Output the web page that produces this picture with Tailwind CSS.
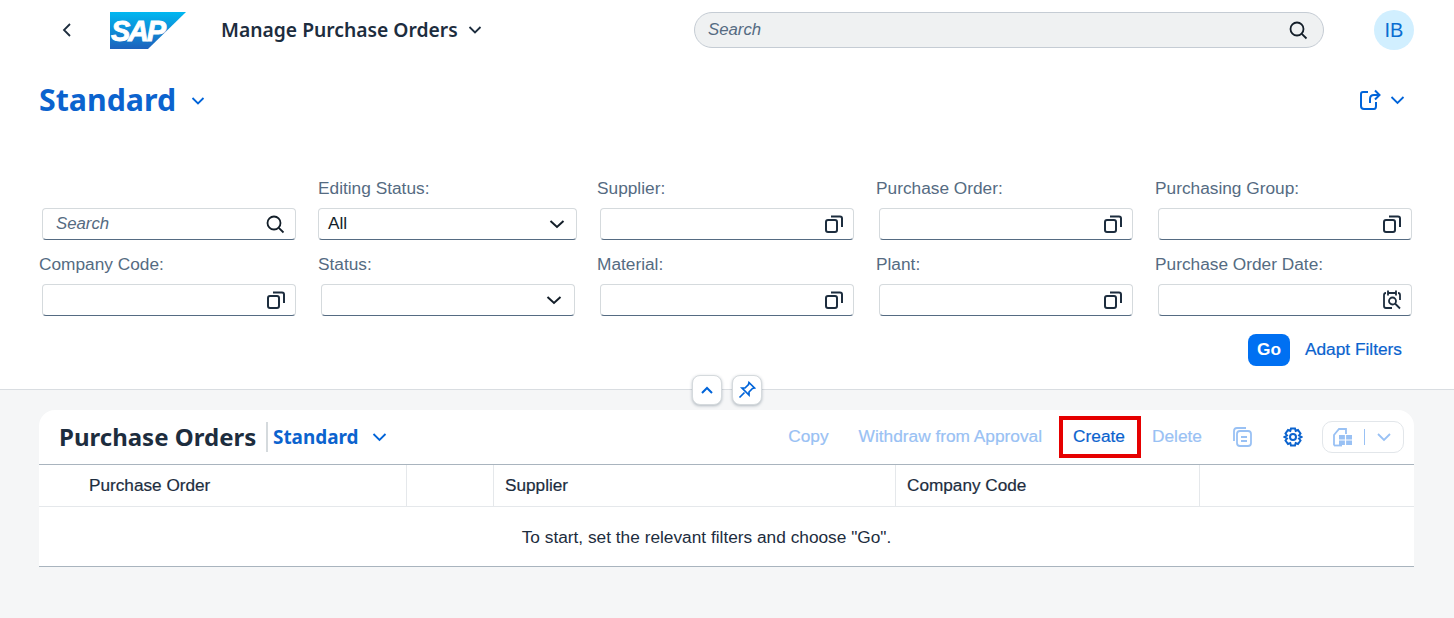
<!DOCTYPE html>
<html><head><meta charset="utf-8"><script src="https://cdn.jsdelivr.net/npm/@tailwindcss/browser@4"></script></head>
<body class="m-0 bg-white font-['Liberation_Sans',Arial,sans-serif] text-[#1d2d3e] overflow-hidden">
<div class="w-[1454px] h-[618px] flex flex-col overflow-hidden">
<div class="h-[390px] bg-white border-b border-[#d9dde1] shrink-0 relative">
  <header class="h-[60px] flex items-center">
    <svg class="ml-[61px] w-3 h-4" viewBox="0 0 12 16" fill="none" stroke="#1d2d3e" stroke-width="1.8"><path d="M9 2 L3 8 L9 14"/></svg>
    <svg class="ml-[37px] w-[76px] h-[37px] mt-[1px]" viewBox="0 0 76 37"><defs><linearGradient id="g" x1="0" y1="0" x2="0" y2="1"><stop offset="0" stop-color="#00b8f1"/><stop offset="1" stop-color="#1d61bc"/></linearGradient></defs><path d="M0 0H76L38 37H0Z" fill="url(#g)"/><text x="1" y="29" font-family="Liberation Sans" font-weight="700" font-style="italic" font-size="29" fill="#fff" stroke="#fff" stroke-width="0.8" textLength="55">SAP</text></svg>
    <div class="ml-[35px] text-[19.3px] font-semibold font-['Noto_Sans',sans-serif] whitespace-nowrap leading-none w-[238px]">Manage Purchase Orders</div>
    <svg class="ml-[9px] w-[14px] h-[10px]" viewBox="0 0 14 10" fill="none" stroke="#1d2d3e" stroke-width="1.8"><path d="M1.5 2 L7 7.5 L12.5 2"/></svg>
    <div class="ml-[212px] w-[630px] h-9 rounded-[18px] bg-[#eff1f2] border border-[#c5ccd4] flex items-center justify-between pl-[13px] pr-[15px] shrink-0">
      <span class="italic text-[#556b82] text-[16.8px]">Search</span>
      <svg class="w-[19px] h-[19px]" viewBox="0 0 19 19" fill="none" stroke="#131e29" stroke-width="1.8"><circle cx="8" cy="8" r="6.5"/><path d="M12.8 12.8 L17.5 17.5"/></svg>
    </div>
    <div class="ml-[50px] w-10 h-10 rounded-full bg-[#d1efff] text-[#0a6ed1] text-[20px] flex items-center justify-center shrink-0">IB</div>
  </header>
  <div class="h-[80px] flex items-start pl-[39px] relative">
    <span class="text-[30.3px] font-bold font-['Noto_Sans',sans-serif] text-[#0b63ce] leading-none mt-[25px] w-[137px] whitespace-nowrap">Standard</span>
    <svg class="ml-[15px] mt-[36px] w-[14px] h-[10px]" viewBox="0 0 14 10" fill="none" stroke="#0064d9" stroke-width="1.8"><path d="M1.5 2 L7 7.5 L12.5 2"/></svg>
    <div class="ml-auto mr-[49px] mt-[29px] flex items-center gap-[9px]">
      <svg class="w-[21px] h-[21px]" viewBox="0 0 21 21" fill="none" stroke="#0064d9" stroke-width="2"><path d="M8 3 H3 Q1 3 1 5 V17 Q1 20 4 20 H14 Q16 20 16 17 V13"/><path d="M10 14 V10 Q10 6 14 6 H19 M15 1.5 L19.5 6 L15 10.5"/></svg>
      <svg class="w-[15px] h-[10px]" viewBox="0 0 14 10" fill="none" stroke="#0064d9" stroke-width="1.8"><path d="M1 2 L7 8 L13 2"/></svg>
    </div>
  </div>
  <div class="grid grid-cols-[279px_279px_279px_279px_279px] pl-[39px] mt-[36px] text-[17.3px] text-[#556b82]">
    <div class="h-[76px]">
      <div class="h-[32px]"></div>
      <div class="ml-[3px] w-[254px] h-[32px] rounded-[4px] border border-[#d5dadd] border-b-[#556b82] flex items-center justify-between pl-[13px] pr-[10px]"><span class="italic text-[16.8px] text-[#556b82]">Search</span><svg class="w-[19px] h-[19px]" viewBox="0 0 19 19" fill="none" stroke="#131e29" stroke-width="1.8"><circle cx="8" cy="8" r="6.5"/><path d="M12.8 12.8 L17.5 17.5"/></svg></div>
    </div>
    <div class="h-[76px]">
      <div class="h-[32px] leading-[24px]">Editing Status:</div>
      <div class="w-[259px] h-[32px] rounded-[4px] border border-[#d5dadd] border-b-[#556b82] flex items-center justify-between pl-[9px] pr-[11px] text-[#131e29]"><span>All</span><svg class="w-[16px] h-[10px]" viewBox="0 0 16 10" fill="none" stroke="#131e29" stroke-width="2"><path d="M1.5 2 L8 8 L14.5 2"/></svg></div>
    </div>
    <div class="h-[76px]">
      <div class="h-[32px] leading-[24px]">Supplier:</div>
      <div class="ml-[3px] w-[254px] h-[32px] rounded-[4px] border border-[#d5dadd] border-b-[#556b82] flex items-center justify-end pr-[10px]"><svg class="w-[18px] h-[18px]" viewBox="0 0 18 18" fill="none" stroke="#1d2d3e" stroke-width="2"><rect x="1" y="5" width="11" height="12" rx="2"/><path d="M6 1.5 H15 Q17 1.5 17 3.5 V12"/></svg></div>
    </div>
    <div class="h-[76px]">
      <div class="h-[32px] leading-[24px]">Purchase Order:</div>
      <div class="ml-[3px] w-[254px] h-[32px] rounded-[4px] border border-[#d5dadd] border-b-[#556b82] flex items-center justify-end pr-[10px]"><svg class="w-[18px] h-[18px]" viewBox="0 0 18 18" fill="none" stroke="#1d2d3e" stroke-width="2"><rect x="1" y="5" width="11" height="12" rx="2"/><path d="M6 1.5 H15 Q17 1.5 17 3.5 V12"/></svg></div>
    </div>
    <div class="h-[76px]">
      <div class="h-[32px] leading-[24px]">Purchasing Group:</div>
      <div class="ml-[3px] w-[254px] h-[32px] rounded-[4px] border border-[#d5dadd] border-b-[#556b82] flex items-center justify-end pr-[10px]"><svg class="w-[18px] h-[18px]" viewBox="0 0 18 18" fill="none" stroke="#1d2d3e" stroke-width="2"><rect x="1" y="5" width="11" height="12" rx="2"/><path d="M6 1.5 H15 Q17 1.5 17 3.5 V12"/></svg></div>
    </div>
    <div class="h-[76px]">
      <div class="h-[32px] leading-[24px]">Company Code:</div>
      <div class="ml-[3px] w-[254px] h-[32px] rounded-[4px] border border-[#d5dadd] border-b-[#556b82] flex items-center justify-end pr-[10px]"><svg class="w-[18px] h-[18px]" viewBox="0 0 18 18" fill="none" stroke="#1d2d3e" stroke-width="2"><rect x="1" y="5" width="11" height="12" rx="2"/><path d="M6 1.5 H15 Q17 1.5 17 3.5 V12"/></svg></div>
    </div>
    <div class="h-[76px]">
      <div class="h-[32px] leading-[24px]">Status:</div>
      <div class="ml-[3px] w-[254px] h-[32px] rounded-[4px] border border-[#d5dadd] border-b-[#556b82] flex items-center justify-end pr-[12px]"><svg class="w-[16px] h-[10px]" viewBox="0 0 16 10" fill="none" stroke="#131e29" stroke-width="2"><path d="M1.5 2 L8 8 L14.5 2"/></svg></div>
    </div>
    <div class="h-[76px]">
      <div class="h-[32px] leading-[24px]">Material:</div>
      <div class="ml-[3px] w-[254px] h-[32px] rounded-[4px] border border-[#d5dadd] border-b-[#556b82] flex items-center justify-end pr-[10px]"><svg class="w-[18px] h-[18px]" viewBox="0 0 18 18" fill="none" stroke="#1d2d3e" stroke-width="2"><rect x="1" y="5" width="11" height="12" rx="2"/><path d="M6 1.5 H15 Q17 1.5 17 3.5 V12"/></svg></div>
    </div>
    <div class="h-[76px]">
      <div class="h-[32px] leading-[24px]">Plant:</div>
      <div class="ml-[3px] w-[254px] h-[32px] rounded-[4px] border border-[#d5dadd] border-b-[#556b82] flex items-center justify-end pr-[10px]"><svg class="w-[18px] h-[18px]" viewBox="0 0 18 18" fill="none" stroke="#1d2d3e" stroke-width="2"><rect x="1" y="5" width="11" height="12" rx="2"/><path d="M6 1.5 H15 Q17 1.5 17 3.5 V12"/></svg></div>
    </div>
    <div class="h-[76px]">
      <div class="h-[32px] leading-[24px]">Purchase Order Date:</div>
      <div class="ml-[3px] w-[254px] h-[32px] rounded-[4px] border border-[#d5dadd] border-b-[#556b82] flex items-center justify-end pr-[10px]"><svg class="w-[18px] h-[20px]" viewBox="0 0 18 20" fill="none" stroke="#1d2d3e" stroke-width="1.8"><path d="M5 3 H13 M5 0.5 V5.5 M13 0.5 V5.5 M3 3 Q1 3 1 5 V16 Q1 18 3 18 H9 M15 3 Q17 3 17 5 V10"/><circle cx="9.5" cy="11" r="3.5"/><path d="M12 13.5 L17 18.5"/></svg></div>
    </div>
  </div>
  <div class="flex justify-end items-center pr-[52px] mt-[6px] gap-[15px]">
    <div class="w-[42px] h-8 rounded-lg bg-[#0070f2] text-white font-bold text-[17.3px] flex items-center justify-center">Go</div>
    <div class="text-[#0b63ce] text-[17.3px] whitespace-nowrap [-webkit-text-stroke:0.2px_#0b63ce]">Adapt Filters</div>
  </div>
  <div class="absolute top-[375px] left-[692px] flex gap-[10px]">
    <div class="w-[30px] h-[30px] rounded-lg bg-white border border-[#d5dadd] shadow-[0_1px_3px_rgba(50,70,90,0.35)] flex items-center justify-center"><svg class="w-[14px] h-[10px]" viewBox="0 0 14 10" fill="none" stroke="#0064d9" stroke-width="2"><path d="M2 8 L7 3 L12 8"/></svg></div>
    <div class="w-[30px] h-[30px] rounded-lg bg-white border border-[#d5dadd] shadow-[0_1px_3px_rgba(50,70,90,0.35)] flex items-center justify-center"><svg class="w-[18px] h-[18px]" viewBox="0 0 18 18" fill="none" stroke="#0064d9" stroke-width="1.7"><path d="M11 1.5 L16.5 7 L14.5 7.5 L11 11 L11 14 L4 7 L7 7 L10.5 3.5 Z"/><path d="M6.5 11.5 L1.5 16.5"/></svg></div>
  </div>
</div>
<main class="flex-1 bg-[#f5f6f7] px-[39px] pr-[40px] pt-[20px]">
  <section class="bg-white rounded-t-[16px] border-b border-[#a9b4be]">
    <div class="h-[55px] flex items-center border-b border-[#a9b4be] pl-[20px] pr-[10px] relative">
      <span class="text-[24px] font-bold font-['Noto_Sans',sans-serif] leading-none whitespace-nowrap w-[198px]">Purchase Orders</span>
      <span class="ml-[9px] w-[2px] h-[30px] bg-[#d5dadd]"></span>
      <span class="ml-[5px] text-[18.9px] font-bold font-['Noto_Sans',sans-serif] text-[#0b63ce] whitespace-nowrap">Standard</span>
      <svg class="ml-[14px] w-[15px] h-[10px]" viewBox="0 0 14 10" fill="none" stroke="#0064d9" stroke-width="1.8"><path d="M1 2 L7 8 L13 2"/></svg>
      <div class="ml-auto flex items-center text-[17.3px] text-[#99c1f4] [-webkit-text-stroke:0.2px_#99c1f4]">
        <span>Copy</span>
        <span class="ml-[30px]">Withdraw from Approval</span>
        <span class="ml-[17px] w-[82px] h-[42px] border-[4px] border-[#e60000] text-[#0b63ce] [-webkit-text-stroke:0.2px_#0b63ce] flex items-center justify-center pr-[2px]">Create</span>
        <span class="ml-[11px]">Delete</span>
        <svg class="ml-[31px] w-[19px] h-[20px]" viewBox="0 0 19 20" fill="none" stroke="#99c1f4" stroke-width="1.8"><rect x="4" y="4" width="14" height="15" rx="3"/><path d="M1 14 V4 Q1 1 4 1 H13 M8 10 H14 M8 14 H14"/></svg>
        <svg class="ml-[31px] w-[20px] h-[20px]" viewBox="0 0 20 20" fill="none" stroke="#0b63ce" stroke-width="2"><circle cx="10" cy="10" r="3"/><path d="M8 1.5 H12 L12.7 4 L15 3 L17.5 6.5 L16 8.5 L18.5 10 L16 11.5 L17.5 13.5 L15 17 L12.7 16 L12 18.5 H8 L7.3 16 L5 17 L2.5 13.5 L4 11.5 L1.5 10 L4 8.5 L2.5 6.5 L5 3 L7.3 4 Z"/></svg>
        <div class="ml-[19px] w-[82px] h-8 rounded-[10px] border border-[#e2e6ea] flex items-center pl-[10px]">
          <svg class="w-[20px] h-[19px]" viewBox="0 0 20 19" fill="none" stroke="#99c1f4" stroke-width="1.8"><path d="M1 17.5 V7 L6 1 H13 V6"/><path d="M1 17.5 H9"/><rect x="6" y="7" width="13" height="10" fill="#99c1f4" stroke="none"/><path d="M12.5 7 V17 M6 12 H19" stroke="#fff" stroke-width="1.2"/></svg>
          <span class="ml-[11px] w-px h-4 bg-[#99c1f4]"></span>
          <svg class="ml-[12px] w-[14px] h-[10px]" viewBox="0 0 14 10" fill="none" stroke="#99c1f4" stroke-width="1.8"><path d="M1 2 L7 8 L13 2"/></svg>
        </div>
      </div>
    </div>
    <div class="h-[42px] grid grid-cols-[368px_87px_402px_304px_1fr] border-b border-[#e5e8eb] text-[17.2px] text-[#1d2d3e] [-webkit-text-stroke:0.2px_#1d2d3e]">
      <div class="pl-[50px] border-r border-[#e5e8eb] flex items-center">Purchase Order</div>
      <div class="border-r border-[#e5e8eb]"></div>
      <div class="pl-[11px] border-r border-[#e5e8eb] flex items-center">Supplier</div>
      <div class="pl-[11px] border-r border-[#e5e8eb] flex items-center">Company Code</div>
      <div></div>
    </div>
    <div class="h-[59px] flex items-center justify-center pr-[40px] pt-[2px] text-[17.3px] text-[#1d2d3e]">To start, set the relevant filters and choose "Go".</div>
  </section>
</main>
</div>
</body></html>
